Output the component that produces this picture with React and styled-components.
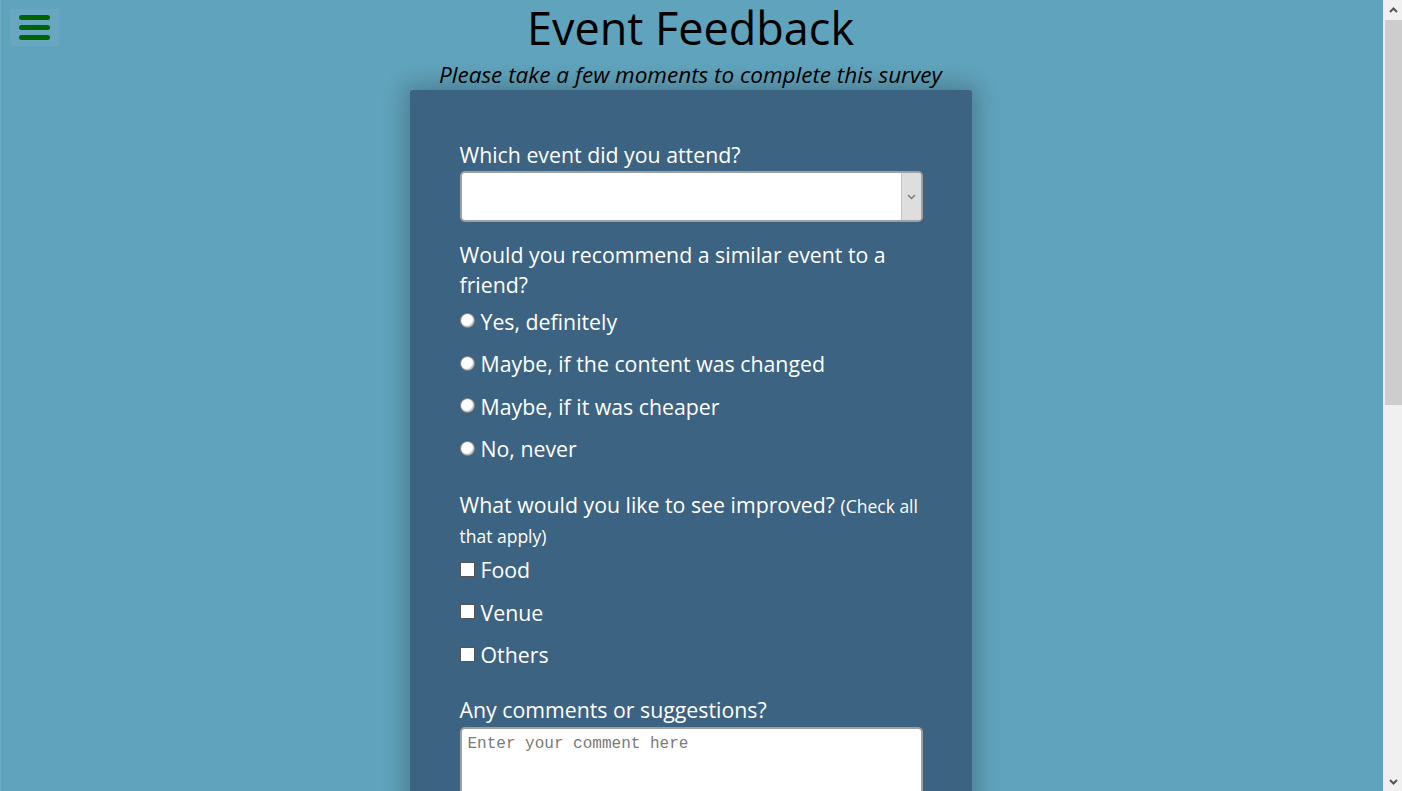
import React from "react";
import styled, { createGlobalStyle } from "styled-components";

const GlobalStyle = createGlobalStyle`
  html, body {
    margin: 0;
    padding: 0;
    height: 100%;
    overflow: hidden;
  }
  body {
    background: #60a3bc;
    font-family: "Open Sans", "Liberation Sans", sans-serif;
  }
`;

const Layout = styled.div`
  display: flex;
  height: 100vh;
`;

const Main = styled.main`
  flex: 1;
  overflow: hidden;
  box-shadow: inset 1px 0 0 #6eaec4;
`;

const Scrollbar = styled.aside`
  width: 19px;
  flex-shrink: 0;
  display: flex;
  flex-direction: column;
  background: #f0f0f0;
  border-left: 1px solid #e9eef0;
  box-sizing: border-box;
`;

const ScrollArrow = styled.span`
  height: 19px;
  display: flex;
  align-items: center;
  justify-content: center;
`;

const Track = styled.div`
  flex: 1;
`;

const Thumb = styled.div`
  height: 385px;
  margin: 1px 0 0 1px;
  background: #cdcdcd;
`;

const Page = styled.div`
  display: flex;
  flex-direction: column;
  align-items: center;
  padding: 0 2px 25px 0;
`;

const MenuButton = styled.button`
  position: fixed;
  top: 9px;
  left: 10px;
  width: 49px;
  height: 37px;
  padding: 0;
  border: none;
  background: rgba(255, 255, 255, 0.05);
  display: flex;
  flex-direction: column;
  align-items: center;
  justify-content: center;
  gap: 5px;
  cursor: pointer;
`;

const Bar = styled.span`
  display: block;
  width: 31px;
  height: 5px;
  border-radius: 3px;
  background: #006400;
`;

const Title = styled.h1`
  margin: 0;
  font-size: 45px;
  font-weight: 400;
  line-height: 55px;
  color: #000;
  text-align: center;
`;

const Subtitle = styled.p`
  margin: 6px 0 0;
  font-size: 22.5px;
  font-style: italic;
  line-height: 28px;
  color: #000;
  text-align: center;
`;

const Card = styled.form`
  box-sizing: border-box;
  width: 562px;
  min-height: 1440px;
  margin-top: 1px;
  padding: 50px 49px 40px 50px;
  background: #3c6382;
  border-radius: 3px;
  box-shadow: 0 0 22px 6px rgba(0, 0, 0, 0.22);
  display: flex;
  flex-direction: column;
`;

const Field = styled.div`
  display: flex;
  flex-direction: column;
  margin-top: ${(p) => p.$gap || 0}px;
`;

const Question = styled.label`
  display: block;
  font-size: 21.3px;
  line-height: 30px;
  color: #fff;
`;

const Hint = styled.span`
  font-size: 17.5px;
  line-height: 1;
`;

const SelectBox = styled.div`
  box-sizing: border-box;
  margin-top: 1px;
  height: 51px;
  display: flex;
  background: #fff;
  border: 2px solid #a0a0a0;
  border-radius: 5px;
  overflow: hidden;
`;

const Select = styled.select`
  flex: 1;
  appearance: none;
  border: none;
  outline: none;
  background: transparent;
  font-family: inherit;
  font-size: 18px;
`;

const ArrowBox = styled.span`
  width: 19px;
  display: flex;
  align-items: center;
  justify-content: center;
  background: #dedede;
  border-left: 1px solid #c4c4c4;
`;

const Options = styled.div`
  display: flex;
  flex-direction: column;
  gap: 12.5px;
  margin-top: ${(p) => p.$gap || 6}px;
`;

const Option = styled.label`
  display: flex;
  align-items: center;
  height: 30px;
  font-size: 21.3px;
  color: #fff;
`;

const Radio = styled.input.attrs({ type: "radio" })`
  appearance: none;
  box-sizing: border-box;
  width: 15px;
  height: 15px;
  margin: 0 6px 1px 0;
  border-radius: 50%;
  background: #fff;
  border: 1px solid #7a7a7a;
  box-shadow: inset -1px -1px 1px rgba(0, 0, 0, 0.25);
`;

const Checkbox = styled.input.attrs({ type: "checkbox" })`
  appearance: none;
  box-sizing: border-box;
  width: 15px;
  height: 15px;
  margin: 0 6px 1px 0;
  background: #fff;
  border: 1px solid #555;
`;

const Comment = styled.textarea`
  box-sizing: border-box;
  margin-top: 2px;
  width: 100%;
  height: 150px;
  padding: 6px 6px;
  border: 2px solid #a0a0a0;
  border-radius: 5px;
  resize: vertical;
  font-family: "Liberation Mono", monospace;
  font-size: 16px;
  &::placeholder {
    color: #7a7a7a;
  }
`;

const Chevron = ({ up, color = "#777", weight = 1.4 }) => (
  <svg width="9" height="6" viewBox="0 0 9 6">
    <path
      d={up ? "M1 5l3.5-3.5L8 5" : "M1 1l3.5 3.5L8 1"}
      fill="none"
      stroke={color}
      strokeWidth={weight}
    />
  </svg>
);

const recommend = [
  "Yes, definitely",
  "Maybe, if the content was changed",
  "Maybe, if it was cheaper",
  "No, never",
];

const improve = ["Food", "Venue", "Others"];

export default function App() {
  return (
    <Layout>
      <GlobalStyle />
      <Main>
        <Page>
          <MenuButton aria-label="menu">
            <Bar />
            <Bar />
            <Bar />
          </MenuButton>
          <Title>Event Feedback</Title>
          <Subtitle>Please take a few moments to complete this survey</Subtitle>
          <Card>
            <Field>
              <Question htmlFor="event">Which event did you attend?</Question>
              <SelectBox>
                <Select id="event" defaultValue="">
                  <option value=""></option>
                </Select>
                <ArrowBox>
                  <Chevron />
                </ArrowBox>
              </SelectBox>
            </Field>

            <Field $gap={18}>
              <Question>Would you recommend a similar event to a friend?</Question>
              <Options>
                {recommend.map((r) => (
                  <Option key={r}>
                    <Radio name="recommend" value={r} />
                    {r}
                  </Option>
                ))}
              </Options>
            </Field>

            <Field $gap={26}>
              <Question>
                What would you like to see improved? <Hint>(Check all that apply)</Hint>
              </Question>
              <Options $gap={5}>
                {improve.map((i) => (
                  <Option key={i}>
                    <Checkbox value={i} />
                    {i}
                  </Option>
                ))}
              </Options>
            </Field>

            <Field $gap={25}>
              <Question htmlFor="comment">Any comments or suggestions?</Question>
              <Comment id="comment" placeholder="Enter your comment here" />
            </Field>
          </Card>
        </Page>
      </Main>
      <Scrollbar>
        <ScrollArrow>
          <Chevron up color="#555" weight={2} />
        </ScrollArrow>
        <Track>
          <Thumb />
        </Track>
        <ScrollArrow>
          <Chevron color="#555" weight={2} />
        </ScrollArrow>
      </Scrollbar>
    </Layout>
  );
}
